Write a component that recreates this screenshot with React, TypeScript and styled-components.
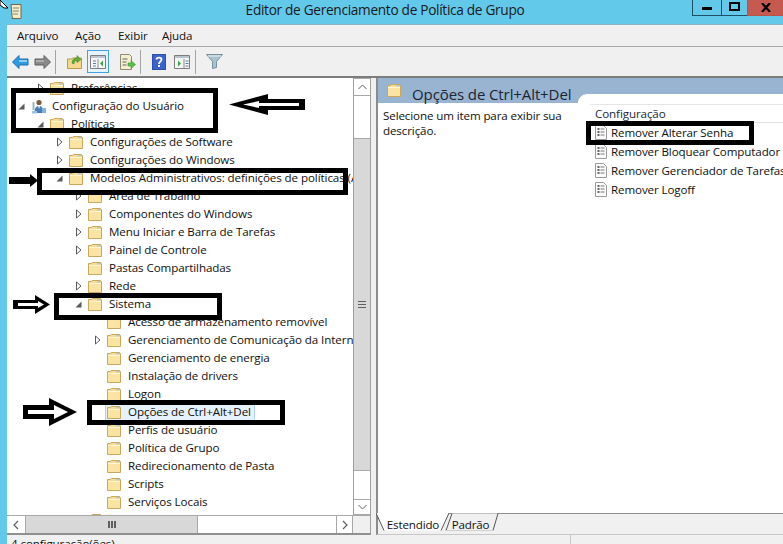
import React from "react";
import styled, { createGlobalStyle } from "styled-components";

const Global = createGlobalStyle`
  html, body { margin: 0; padding: 0; background: #63c9ea; }
  * { box-sizing: border-box; }
`;
const FONT = `"Open Sans", "Noto Sans", "Liberation Sans", sans-serif`;

const Page = styled.div`
  position: relative; width: 783px; height: 544px; overflow: hidden;
  background: #63c9ea; font-family: ${FONT}; color: #101010; display: flex; flex-direction: column;
`;
const TitleBar = styled.div`
  position: relative; height: 24px; flex: none; display: flex; justify-content: center; padding-right: 13px;
`;
const TitleText = styled.div`font-size: 13.7px; line-height: 20px; letter-spacing: -0.32px; color: #1a1a1a;`;
const AppIcon = styled.svg`position: absolute; left: 9px; top: 3px;`;
const Cursor = styled.svg`position: absolute; left: 0; top: 0;`;
const WinButtons = styled.div`position: absolute; right: 0; top: 0; height: 16px; display: flex;`;
const WinBtn = styled.div<{ $w: number; $red?: boolean }>`
  width: ${p => p.$w}px; height: 16px; display: flex; align-items: center; justify-content: center;
  border-bottom: 1px solid ${p => p.$red ? "#b5554a" : "#1d4f66"};
  border-left: 1px solid ${p => p.$red ? "#b5554a" : "#1d4f66"};
  background: ${p => p.$red ? "#c75a4f" : "transparent"};
`;
const Frame = styled.div`
  flex: 1; margin-left: 7px; background: #f0f0f0; display: flex; flex-direction: column; min-height: 0;
`;
const MenuBar = styled.div`
  height: 23px; flex: none; display: flex; padding-left: 10px; align-items: center;
  border-bottom: 1px solid #a9a9a9; font-size: 11.6px; border-top: 1px solid #8eb3c6;
`;
const MenuItem = styled.div<{ $w: number }>`width: ${p => p.$w}px; letter-spacing: -0.1px;`;
const ToolBar = styled.div`
  height: 31px; flex: none; display: flex; align-items: center; padding-left: 4px;
  border-bottom: 2px solid #7d7d7d;
`;
const ToolBtn = styled.div<{ $w: number; $ml?: number; $active?: boolean }>`
  width: ${p => p.$w}px; height: 23px; display: flex; align-items: center; justify-content: center;
  flex: none; margin-left: ${p => p.$ml ?? 0}px;
  ${p => p.$active ? "border: 1px solid #3ea3e0; background: #e5f3fb;" : ""}
`;
const ToolSep = styled.div<{ $l: number; $r: number }>`
  width: 1px; height: 24px; background: #a3a3a3; margin: 0 ${p => p.$r}px 0 ${p => p.$l}px; flex: none;
`;
const Main = styled.div`flex: 1; min-height: 0; display: flex;`;
const LeftPane = styled.div`
  width: 364px; flex: none; display: flex; flex-direction: column; background: #fff;
  border-bottom: 2px solid #8f8f8f; border-right: 1px solid #a0a0a0;
`;
const LeftTop = styled.div`flex: 1; min-height: 0; display: flex;`;
const Tree = styled.div`flex: 1; min-width: 0; overflow: hidden; padding-top: 1px; background: #fff;`;
const Row = styled.div<{ $level: number }>`
  height: 18px; display: flex; align-items: center; white-space: nowrap;
  padding-left: ${p => 10 + p.$level * 19}px; font-size: 11.6px; letter-spacing: -0.09px;
`;
const Expander = styled.span`
  width: 14px; height: 18px; flex: none; display: flex; align-items: center; padding-left: 1px;
`;
const Label = styled.span<{ $m?: number }>`margin-left: ${p => p.$m ?? 7}px; line-height: 18px;`;
const SelBox = styled.span`
  display: flex; align-items: center; height: 17px; margin-left: -2px; padding: 0 3px 0 1px;
  background: #e6f2fb; border: 1px solid #a9d3f0;
`;
const FolderSvg = styled.svg`flex: none;`;
const VScroll = styled.div`
  width: 17px; flex: none; display: flex; flex-direction: column; border-left: 1px solid #a0a0a0; background: #fff;
  border-top: 1px solid #a8a8a8;
`;
const VUp = styled.div`
  height: 17px; flex: none; display: flex; align-items: center; justify-content: center; background: #fff;
  border-bottom: 1px solid #a8a8a8;
`;
const VTrack = styled.div`height: 42px; flex: none; background: #fff;`;
const VThumb = styled.div`
  flex: none; height: 333px; background: #d8d8d8; border-top: 1px solid #a8a8a8; border-bottom: 1px solid #a8a8a8;
  display: flex; align-items: center; justify-content: center;
`;
const VGap = styled.div`flex: 1; background: #fff;`;
const VDown = styled.div`
  height: 16px; flex: none; display: flex; align-items: center; justify-content: center; background: #fff;
  border-top: 1px solid #a8a8a8; border-bottom: 1px solid #a8a8a8;
`;
const GripH = styled.div`width: 8px; height: 7px; background: repeating-linear-gradient(to bottom, #606060 0 1px, transparent 1px 3px);`;
const GripV = styled.div`width: 8px; height: 7px; background: repeating-linear-gradient(to right, #606060 0 2px, transparent 2px 3px);`;
const HScroll = styled.div`
  height: 18px; flex: none; display: flex; background: #fff; border-top: 1px solid #a8a8a8;
`;
const HBtn = styled.div`
  width: 19px; flex: none; display: flex; align-items: center; justify-content: center; background: #fff;
  border-right: 1px solid #a8a8a8;
`;
const HThumb = styled.div`
  width: 172px; flex: none; background: #d8d8d8; border-right: 1px solid #a8a8a8;
  display: flex; align-items: center; justify-content: center;
`;
const HGap = styled.div`flex: 1;`;
const HEnd = styled.div`
  width: 17px; flex: none; display: flex; align-items: center; justify-content: center;
  border-left: 1px solid #a8a8a8; border-right: 1px solid #a8a8a8;
`;
const HCorner = styled.div`width: 17px; flex: none; background: #f0f0f0;`;
const Splitter = styled.div`width: 5px; flex: none; background: #f0f0f0;`;
const RightPane = styled.div`
  flex: 1; min-width: 0; display: flex; flex-direction: column; background: #f0f0f0;
  border-left: 2px solid #8b8b8b; border-bottom: 1px solid #c8c8c8;
`;
const RightBody = styled.div`
  flex: 1; min-height: 0; background: #fff; display: flex; flex-direction: column;
`;
const Header = styled.div`
  height: 25px; flex: none; background: #99b4d1; display: flex; align-items: center; padding-left: 9px;
`;
const HeaderTitle = styled.div`
  font-size: 15px; margin: 6px 0 0 11px; letter-spacing: -0.1px; color: #1a2533; white-space: nowrap;
`;
const Content = styled.div`flex: 1; min-height: 0; display: flex;`;
const Desc = styled.div`
  width: 200px; flex: none; padding: 5px 0 0 5px; font-size: 11.6px; line-height: 15px; letter-spacing: -0.12px;
`;
const ListCol = styled.div`
  position: relative; flex: 1; min-width: 0; overflow: hidden; margin-top: -9px; padding-top: 10px;
  background: #fff; border-top-left-radius: 9px;
`;
const ListHead = styled.div`
  height: 19px; margin-left: 12px; border-top: 1px solid #e6e6e6; border-bottom: 1px solid #e0e0e0;
  padding-left: 5px; font-size: 11.6px; line-height: 18px; letter-spacing: -0.1px; color: #1b2a3a;
`;
const ListRow = styled.div`
  height: 19px; display: flex; align-items: center; white-space: nowrap; padding-left: 17px;
  font-size: 11.6px; letter-spacing: -0.12px;
`;
const ListLabel = styled.span`margin-left: 3px;`;
const Tabs = styled.div`
  height: 21px; flex: none; display: flex; padding-left: 3px; background: #f0f0f0; border-top: 1px solid #8f8f8f;
`;
const Tab = styled.div<{ $w: number; $active?: boolean }>`
  position: relative; width: ${p => p.$w}px; height: 18px; font-size: 11.6px; letter-spacing: -0.16px;
  line-height: 22px; text-align: center; flex: none; z-index: ${p => p.$active ? 1 : 0};
`;
const TabShape = styled.svg<{ $l: number }>`position: absolute; left: ${p => p.$l}px; top: -1px;`;
const TabText = styled.span`position: relative;`;
const Status = styled.div`
  height: 9px; flex: none; background: #f0f0f0; display: flex; font-size: 11.6px; line-height: 18px; letter-spacing: -0.1px;
`;
const StatusCell = styled.div`
  width: 564px; flex: none; padding-left: 4px; border-right: 1px solid #c8c8c8; white-space: nowrap;
`;
const Mark = styled.div<{ $x: number; $y: number; $w: number; $h: number }>`
  position: absolute; left: ${p => p.$x}px; top: ${p => p.$y}px; width: ${p => p.$w}px; height: ${p => p.$h}px;
  border: 5px solid #000; pointer-events: none;
`;
const Arrow = styled.svg<{ $x: number; $y: number }>`position: absolute; left: ${p => p.$x}px; top: ${p => p.$y}px;`;

const Folder = () => (
  <FolderSvg width="14" height="13" viewBox="0 0 14 13">
    <path d="M.5 12.500V1.500h3l.7-1h8.300v1h1v11z" fill="#f9dd92" stroke="#c9a75c" />
    <path d="M1 3.500h12v8.500H1z" fill="#fbe3a2" />
    <path d="M1 3.500h12" stroke="#fff6d5" />
    <path d="M9 1h3.500v1.500H9z" fill="#8cc3e8" opacity=".6" />
  </FolderSvg>
);
const Closed = () => (
  <svg width="7" height="10" viewBox="0 0 7 10"><path d="M1.500 1v8L6 5z" fill="#fff" stroke="#5a5a5a" /></svg>
);
const Open = () => (
  <svg width="7" height="7" viewBox="0 0 7 7"><path d="M6.500 .5v6h-6z" fill="#5a5a5a" /></svg>
);
const UserIcon = () => (
  <FolderSvg width="15" height="15" viewBox="0 0 15 15">
    <circle cx="8" cy="3.500" r="2.600" fill="#7d5a3a" />
    <path d="M3.500 14c0-5 1.500-7 4.500-7s4.500 2 4.500 7z" fill="#4a7fb5" />
    <path d="M7 7l1 3 1-3z" fill="#f2f2f2" />
    <path d="M2.500 3v8" stroke="#9db7cf" strokeWidth="2" />
    <path d="M11 9h4v5h-4z" fill="#7eb6e0" />
    <path d="M1 12h5v2.500H1z" fill="#9ac3e3" />
  </FolderSvg>
);
const PolicyIcon = () => (
  <FolderSvg width="13" height="15" viewBox="0 0 13 15">
    <path d="M.5 .5h8l3 3v11H.5z" fill="#fbfbfb" stroke="#9a9a9a" />
    <path d="M2.500 4h2M2.500 7h2M2.500 10h2" stroke="#333" strokeWidth="1.600" />
    <path d="M5.500 4h4M5.500 7h4M5.500 10h4" stroke="#777" />
  </FolderSvg>
);

type Kind = "closed" | "open" | "none";
const rows: { l: number; k: Kind; t: string; user?: boolean; sel?: boolean }[] = [
  { l: 1, k: "closed", t: "Preferências" },
  { l: 0, k: "open", t: "Configuração do Usuário", user: true },
  { l: 1, k: "open", t: "Políticas" },
  { l: 2, k: "closed", t: "Configurações de Software" },
  { l: 2, k: "closed", t: "Configurações do Windows" },
  { l: 2, k: "open", t: "Modelos Administrativos: definições de políticas (ADMX) recuperadas" },
  { l: 3, k: "closed", t: "Área de Trabalho" },
  { l: 3, k: "closed", t: "Componentes do Windows" },
  { l: 3, k: "closed", t: "Menu Iniciar e Barra de Tarefas" },
  { l: 3, k: "closed", t: "Painel de Controle" },
  { l: 3, k: "none", t: "Pastas Compartilhadas" },
  { l: 3, k: "closed", t: "Rede" },
  { l: 3, k: "open", t: "Sistema" },
  { l: 4, k: "none", t: "Acesso de armazenamento removível" },
  { l: 4, k: "closed", t: "Gerenciamento de Comunicação da Internet" },
  { l: 4, k: "none", t: "Gerenciamento de energia" },
  { l: 4, k: "none", t: "Instalação de drivers" },
  { l: 4, k: "none", t: "Logon" },
  { l: 4, k: "none", t: "Opções de Ctrl+Alt+Del", sel: true },
  { l: 4, k: "none", t: "Perfis de usuário" },
  { l: 4, k: "none", t: "Política de Grupo" },
  { l: 4, k: "none", t: "Redirecionamento de Pasta" },
  { l: 4, k: "none", t: "Scripts" },
  { l: 4, k: "none", t: "Serviços Locais" },
  { l: 3, k: "none", t: "Todas as Configurações" },
];

const policies = ["Remover Alterar Senha", "Remover Bloquear Computador", "Remover Gerenciador de Tarefas", "Remover Logoff"];

export default function App() {
  return (
    <Page>
      <Global />
      <TitleBar>
        <AppIcon width="14" height="17" viewBox="0 0 14 17">
          <path d="M2 1.500h10v11.500c0 1.500 1 2.500-1 2.500H3c1-1 0-2 0-3z" fill="#f5edc8" stroke="#6e6648" />
          <path d="M4 5h6M4 8h6M4 11h5" stroke="#8b8260" />
        </AppIcon>
        <Cursor width="9" height="9" viewBox="0 0 9 9">
          <path d="M0 0l8 8H4L0 5z" fill="#fff" stroke="#000" />
        </Cursor>
        <TitleText>Editor de Gerenciamento de Política de Grupo</TitleText>
        <WinButtons>
          <WinBtn $w={29}>
            <svg width="10" height="4" viewBox="0 0 10 4"><rect width="10" height="3" y="1" fill="#000" /></svg>
          </WinBtn>
          <WinBtn $w={26}>
            <svg width="11" height="11" viewBox="0 0 11 11"><rect x="1" y="1" width="9" height="7" fill="none" stroke="#000" strokeWidth="2" /></svg>
          </WinBtn>
          <WinBtn $w={36} $red>
            <svg width="10" height="9" viewBox="0 0 10 9"><path d="M1 0l8 9M9 0L1 9" stroke="#000" strokeWidth="2.200" /></svg>
          </WinBtn>
        </WinButtons>
      </TitleBar>
      <Frame>
        <MenuBar>
          <MenuItem $w={58}>Arquivo</MenuItem>
          <MenuItem $w={43}>Ação</MenuItem>
          <MenuItem $w={44}>Exibir</MenuItem>
          <MenuItem $w={50}>Ajuda</MenuItem>
        </MenuBar>
        <ToolBar>
          <ToolBtn $w={18}>
            <svg width="17" height="14" viewBox="0 0 17 14"><path d="M.5 7L7 .5V4h9v6H7v3.500z" fill="#2e9be0" stroke="#1a6fb0" /><path d="M7 5h8v2H7z" fill="#8fd0f5" /></svg>
          </ToolBtn>
          <ToolBtn $w={26}>
            <svg width="17" height="14" viewBox="0 0 17 14"><path d="M16.500 7L10 .5V4H1v6h9v3.500z" fill="#8a8a8a" stroke="#5f5f5f" /><path d="M2 5h8v2H2z" fill="#aeaeae" /></svg>
          </ToolBtn>
          <ToolSep $l={0} $r={5} />
          <ToolBtn $w={26}>
            <svg width="15" height="15" viewBox="0 0 15 15"><path d="M.5 5h4l1-1h9v10.500H.5z" fill="#f5d98c" stroke="#b99a4e" /><path d="M5 9c0-3 2-5 5-5V1.500l4 4-4 3V6.500C8 6.500 7 8 7 10z" fill="#5fae3c" stroke="#3f8426" strokeWidth=".6" /></svg>
          </ToolBtn>
          <ToolBtn $w={22} $active>
            <svg width="16" height="14" viewBox="0 0 16 14"><path d="M.5 .5h15v13H.5z" fill="#f6f6f6" stroke="#7d7d7d" /><path d="M1 1h14v2H1z" fill="#b9c4ce" /><path d="M8 4v9" stroke="#8a8a8a" /><path d="M13 5.500v6l-3-3z" fill="#3aa84a" /><path d="M3 6h3M3 8.500h3M3 11h3" stroke="#5a7ea0" /></svg>
          </ToolBtn>
          <ToolBtn $w={24} $ml={7}>
            <svg width="16" height="16" viewBox="0 0 16 16"><path d="M.5 .5h9l2 2v13H.5z" fill="#f5eecf" stroke="#8d8a76" /><path d="M2.500 5h5M2.500 8h4M2.500 11h4" stroke="#666" /><path d="M8 9h3V6.500L15.500 10.500 11 14.500V12H8z" fill="#58c04e" stroke="#3b9033" strokeWidth=".6" /></svg>
          </ToolBtn>
          <ToolSep $l={0} $r={6} />
          <ToolBtn $w={23}>
            <svg width="14" height="16" viewBox="0 0 14 16"><rect width="14" height="16" fill="#2d4fb0" /><rect x="1" y="1" width="12" height="14" fill="#3a63cf" /><path d="M4.500 5.500C4.500 3 9.500 3 9.500 5.500 9.500 7.500 7 7.500 7 10" fill="none" stroke="#fff" strokeWidth="1.800" /><rect x="6" y="11" width="2" height="2" fill="#fff" /></svg>
          </ToolBtn>
          <ToolBtn $w={24}>
            <svg width="16" height="14" viewBox="0 0 16 14"><path d="M.5 .5h15v13H.5z" fill="#f6f6f6" stroke="#7d7d7d" /><path d="M1 1h14v2H1z" fill="#b9c4ce" /><path d="M10 4v9" stroke="#8a8a8a" /><path d="M4 5.500v6l3-3z" fill="#3aa84a" /><path d="M11.500 6h3M11.500 8.500h3M11.500 11h3" stroke="#5a7ea0" /></svg>
          </ToolBtn>
          <ToolSep $l={1} $r={7} />
          <ToolBtn $w={23}>
            <svg width="17" height="15" viewBox="0 0 17 15"><path d="M.5 .5h16L10.500 7.500v6l-4 1v-7z" fill="#a9c2cf" stroke="#77909d" /><path d="M2 2h13" stroke="#e8f1f5" /></svg>
          </ToolBtn>
        </ToolBar>
        <Main>
          <LeftPane>
            <LeftTop>
              <Tree>
                {rows.map(r => (
                  <Row key={r.t} $level={r.l}>
                    <Expander>{r.k === "closed" ? <Closed /> : r.k === "open" ? <Open /> : null}</Expander>
                    {r.sel ? (
                      <SelBox><Folder /><Label>{r.t}</Label></SelBox>
                    ) : (
                      <>
                        {r.user ? <UserIcon /> : <Folder />}
                        <Label $m={r.user ? 6 : 7}>{r.t}</Label>
                      </>
                    )}
                  </Row>
                ))}
              </Tree>
              <VScroll>
                <VUp>
                  <svg width="9" height="6" viewBox="0 0 9 6"><path d="M.5 5l4-4 4 4" fill="none" stroke="#606060" /></svg>
                </VUp>
                <VTrack />
                <VThumb><GripH /></VThumb>
                <VGap />
                <VDown>
                  <svg width="9" height="6" viewBox="0 0 9 6"><path d="M.5 1l4 4 4-4" fill="none" stroke="#606060" /></svg>
                </VDown>
              </VScroll>
            </LeftTop>
            <HScroll>
              <HBtn><svg width="6" height="10" viewBox="0 0 6 10"><path d="M5 1L1 5l4 4" fill="none" stroke="#606060" strokeWidth="1.200" /></svg></HBtn>
              <HThumb><GripV /></HThumb>
              <HGap />
              <HEnd><svg width="6" height="10" viewBox="0 0 6 10"><path d="M1 1l4 4-4 4" fill="none" stroke="#606060" strokeWidth="1.200" /></svg></HEnd>
              <HCorner />
            </HScroll>
          </LeftPane>
          <Splitter />
          <RightPane>
            <RightBody>
              <Header>
                <Folder />
                <HeaderTitle>Opções de Ctrl+Alt+Del</HeaderTitle>
              </Header>
              <Content>
                <Desc>Selecione um item para exibir sua descrição.</Desc>
                <ListCol>
                  <ListHead>Configuração</ListHead>
                  {policies.map(p => (
                    <ListRow key={p}><PolicyIcon /><ListLabel>{p}</ListLabel></ListRow>
                  ))}
                </ListCol>
              </Content>
            </RightBody>
            <Tabs>
              <Tab $w={64} $active>
                <TabShape $l={-5} width="74" height="19" viewBox="0 0 74 19">
                  <path d="M0 0l8 17.500h57L73 0z" fill="#fff" />
                  <path d="M0 0l8 17.500M65 17.500L73 0" fill="none" stroke="#555" />
                </TabShape>
                <TabText>Estendido</TabText>
              </Tab>
              <Tab $w={51}>
                <TabShape $l={0} width="54" height="19" viewBox="0 0 54 19">
                  <path d="M1 17.500L7 .5h46l-5 17z" fill="#f0f0f0" />
                  <path d="M1 17.500L7 .5M53 .5l-5 17" fill="none" stroke="#555" />
                  <path d="M1 17.500h47" stroke="#d0d0d0" />
                </TabShape>
                <TabText>Padrão</TabText>
              </Tab>
            </Tabs>
          </RightPane>
        </Main>
        <Status><StatusCell>4 configuração(ões)</StatusCell></Status>
      </Frame>

      <Mark $x={11} $y={88} $w={207} $h={45} />
      <Mark $x={37} $y={168} $w={311} $h={27} />
      <Mark $x={54} $y={293} $w={168} $h={27} />
      <Mark $x={87} $y={400} $w={198} $h={25} />
      <Mark $x={586} $y={121} $w={168} $h={24} />

      <Arrow $x={229} $y={94} width="76" height="22" viewBox="0 0 76 22">
        <path d="M0 10.500L39 0v5h37v11H39v5z" fill="#000" />
        <path d="M14 10.500L30 7v2h40v3H30v2z" fill="#fff" />
      </Arrow>
      <Arrow $x={9} $y={174} width="29" height="13" viewBox="0 0 29 13">
        <path d="M0 3h21V0l8 6.500-8 6.500v-3H0z" fill="#000" />
      </Arrow>
      <Arrow $x={13} $y={295} width="38" height="19" viewBox="0 0 38 19">
        <path d="M0 5h22V0l15 9.500L22 19v-5H0z" fill="#000" />
        <path d="M5 8h20V6l6 3.500-6 3.500v-2H5z" fill="#fff" />
      </Arrow>
      <Arrow $x={23} $y={398} width="55" height="28" viewBox="0 0 55 28">
        <path d="M0 7h26V0l28 14-28 14v-7H0z" fill="#000" />
        <path d="M5 12h26V7l14 7-14 7v-5H5z" fill="#fff" />
      </Arrow>
    </Page>
  );
}
